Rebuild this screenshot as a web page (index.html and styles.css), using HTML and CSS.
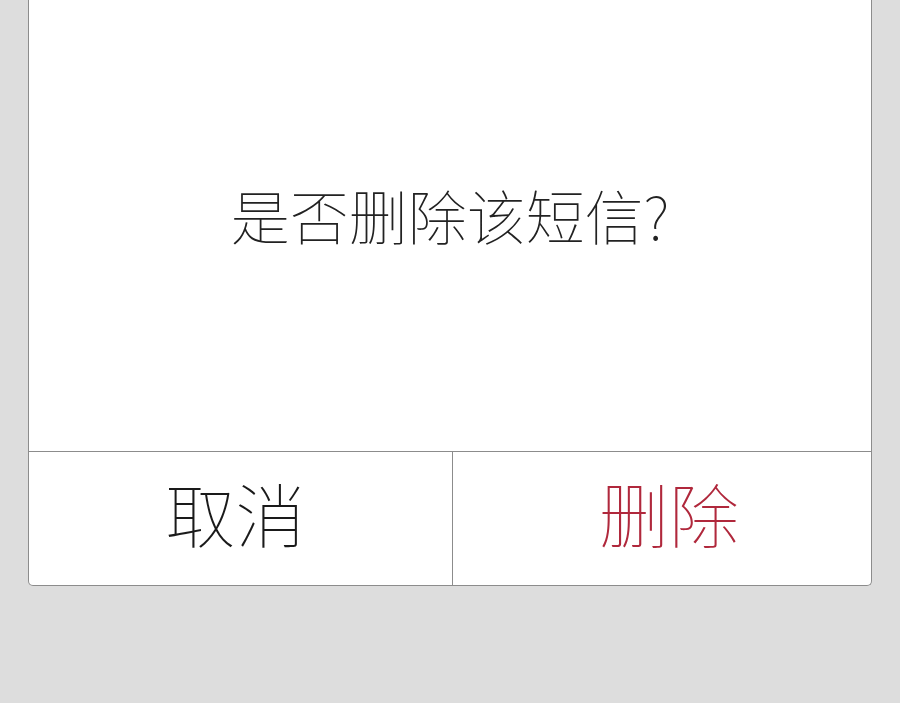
FILE: index.html
```html
<!DOCTYPE html>
<html lang="zh-CN">
<head>
    <meta charset="UTF-8">
    <meta name="viewport" content="width=device-width, initial-scale=1.0">
    <title>删除短信</title>
    <link rel="stylesheet" href="styles.css">
</head>
<body>
    <div class="dialog">
        <div class="message">是否删除该短信?</div>
        <div class="actions">
            <button class="btn cancel">取消</button>
            <button class="btn delete">删除</button>
        </div>
    </div>
</body>
</html>
```

FILE: styles.css
```css
body {
    margin: 0;
    padding: 0;
    background-color: #dddddd;
    font-family: "Noto Sans CJK SC", "Noto Sans", sans-serif;
    font-weight: 100;
}

.dialog {
    margin: 0 28px;
    background-color: #fff;
    border: 1px solid #8c8c8c;
    border-top: none;
    border-radius: 0 0 5px 5px;
}

.message {
    height: 451px;
    display: flex;
    align-items: center;
    justify-content: center;
    font-size: 59px;
    color: #222;
    padding-bottom: 22px;
    box-sizing: border-box;
}

.actions {
    display: flex;
    border-top: 1px solid #8c8c8c;
    height: 133px;
}

.btn {
    border: none;
    background: none;
    font-family: inherit;
    font-weight: 100;
    font-size: 70px;
    cursor: pointer;
}

.cancel {
    flex: 0 0 424px;
    padding: 0 10px 12px 0;
    color: #1a1a1a;
    border-right: 1px solid #8c8c8c;
}

.delete {
    flex: 1;
    padding: 0 0 12px 14px;
    color: #b0283c;
}
```
